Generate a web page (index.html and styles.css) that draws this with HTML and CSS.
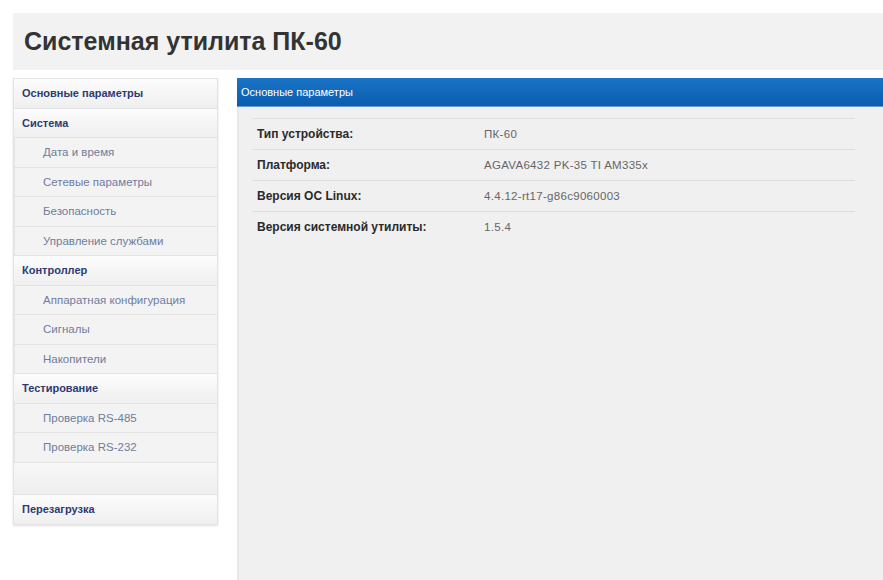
FILE: index.html
```html
<!DOCTYPE html>
<html lang="ru">
<head>
<meta charset="utf-8">
<title>Системная утилита ПК-60</title>
<link rel="stylesheet" href="styles.css">
</head>
<body>
<div class="page">
  <header class="top">
    <h1 class="title">Системная утилита ПК-60</h1>
  </header>
  <div class="layout">
    <nav class="menu">
      <a class="item group">Основные параметры</a>
      <a class="item group">Система</a>
      <a class="item sub">Дата и время</a>
      <a class="item sub">Сетевые параметры</a>
      <a class="item sub">Безопасность</a>
      <a class="item sub">Управление службами</a>
      <a class="item group">Контроллер</a>
      <a class="item sub">Аппаратная конфигурация</a>
      <a class="item sub">Сигналы</a>
      <a class="item sub">Накопители</a>
      <a class="item group">Тестирование</a>
      <a class="item sub">Проверка RS-485</a>
      <a class="item sub">Проверка RS-232</a>
      <div class="item spacer"></div>
      <a class="item group last">Перезагрузка</a>
    </nav>
    <main class="panel">
      <div class="panel-head">Основные параметры</div>
      <div class="panel-body">
        <table class="info">
          <tr><th>Тип устройства:</th><td>ПК-60</td></tr>
          <tr><th>Платформа:</th><td>AGAVA6432 PK-35 TI AM335x</td></tr>
          <tr><th>Версия ОС Linux:</th><td>4.4.12-rt17-g86c9060003</td></tr>
          <tr class="end"><th>Версия системной утилиты:</th><td>1.5.4</td></tr>
        </table>
      </div>
    </main>
  </div>
</div>
</body>
</html>
```

FILE: styles.css
```css
html, body {
  margin: 0;
  padding: 0;
  background: #ffffff;
  font-family: "Liberation Sans", Arial, sans-serif;
  height: 100%;
}

.page {
  display: flex;
  flex-direction: column;
  height: 100%;
  padding: 13px 0 0 13px;
  box-sizing: border-box;
}

.top {
  height: 57px;
  background: #f2f2f2;
  display: flex;
  align-items: center;
  padding-left: 11px;
}

.title {
  margin: 0;
  font-size: 25px;
  font-weight: bold;
  color: #333333;
}

.layout {
  display: flex;
  gap: 19px;
  flex: 1;
  margin-top: 8px;
  min-height: 0;
}

/* left navigation */
.menu {
  width: 205px;
  box-sizing: border-box;
  flex: none;
  align-self: flex-start;
  display: flex;
  flex-direction: column;
  border: 1px solid #e4e4e4;
  box-shadow: 0 1px 2px rgba(0, 0, 0, 0.12);
  background: #f4f4f4;
}

.item {
  height: 29.5px;
  flex: none;
  box-sizing: border-box;
  display: flex;
  align-items: center;
  font-size: 11px;
  border-bottom: 1px solid #e3e3e3;
  text-decoration: none;
  cursor: pointer;
  white-space: nowrap;
}

.item.group {
  padding-left: 8px;
  font-weight: bold;
  color: #2b3b74;
  background: linear-gradient(#fcfcfc, #efefef);
}

.item.sub {
  padding-left: 28px;
  font-size: 11.5px;
  color: #6f7c9c;
  background: #f3f3f3;
  border-left: 1px solid #e6e6e6;
}

.item.spacer {
  height: 32px;
  background: linear-gradient(#f8f8f8, #eeeeee);
}

.item.last {
  border-bottom: none;
  height: 29px;
}

/* main panel */
.panel {
  flex: 1;
  display: flex;
  flex-direction: column;
  background: #f0f0f0;
}

.panel-head {
  height: 29px;
  flex: none;
  box-sizing: border-box;
  display: flex;
  align-items: center;
  padding-left: 4px;
  color: #ffffff;
  font-size: 11px;
  background: linear-gradient(#1b74c6, #0b5cae);
  border-bottom: 1px solid #6c9bd2;
}

.panel-body {
  flex: 1;
  padding: 11px 28px 0 13px;
  border-left: 2px solid #e8e8e8;
}

.info {
  width: 100%;
  border-collapse: collapse;
  border-top: 1px solid #e0e0e0;
}

.info tr {
  height: 31px;
  border-bottom: 1px solid #dddddd;
}

.info tr.end {
  border-bottom: none;
}

.info th {
  text-align: left;
  font-weight: bold;
  font-size: 12px;
  color: #2a2a2a;
  width: 227px;
  padding: 0 0 0 5px;
}

.info td {
  font-size: 11.5px;
  color: #666666;
  letter-spacing: 0.3px;
  padding: 0;
}
```
